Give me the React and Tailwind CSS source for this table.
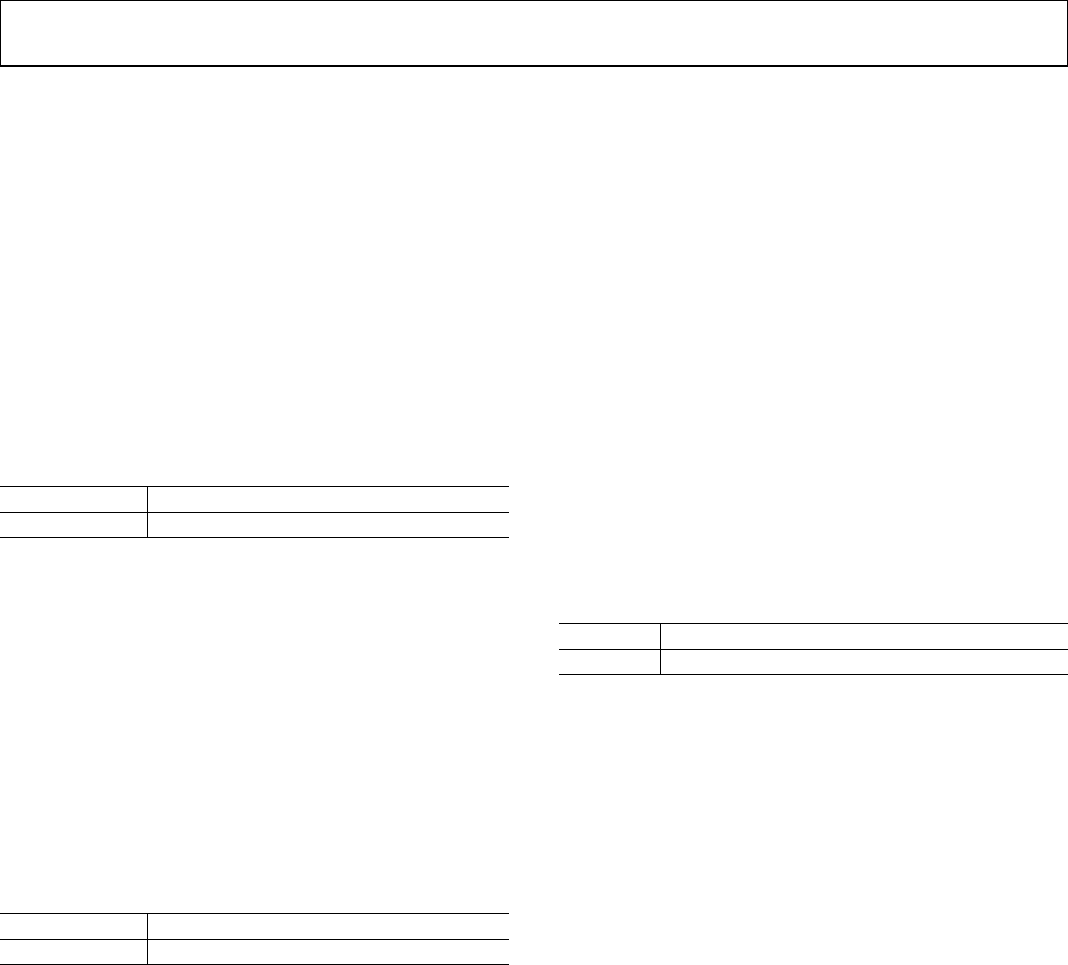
import React from 'react';

// Two-row table with a label column and a value column; cells are empty in the reference
const BlankTable = ({ labelWidth }) => (
  <div className="w-full border-t border-black">
    {[0, 1].map((i) => (
      <div key={i} className="flex h-[25.5px] border-b border-black">
        <div className={`${labelWidth} h-full border-r border-black`} />
        <div className="flex-1 h-full" />
      </div>
    ))}
  </div>
);

const App = () => {
  return (
    <div className="w-[1068px] h-[965px] bg-white overflow-hidden" style={{ fontFamily: '"Liberation Sans", Arial, sans-serif' }}>
      {/* Header box */}
      <div className="w-full h-[67px] border border-b-2 border-black" />

      <div className="flex justify-between">
        {/* Left column */}
        <div className="w-[509px] flex flex-col">
          <div className="h-[419px]" />
          <BlankTable labelWidth="w-[148px]" />
          <div className="h-[375px]" />
          <BlankTable labelWidth="w-[148px]" />
        </div>

        {/* Right column */}
        <div className="w-[509px] flex flex-col">
          <div className="h-[556px]" />
          <BlankTable labelWidth="w-[102px]" />
        </div>
      </div>
    </div>
  );
};

export default App;
